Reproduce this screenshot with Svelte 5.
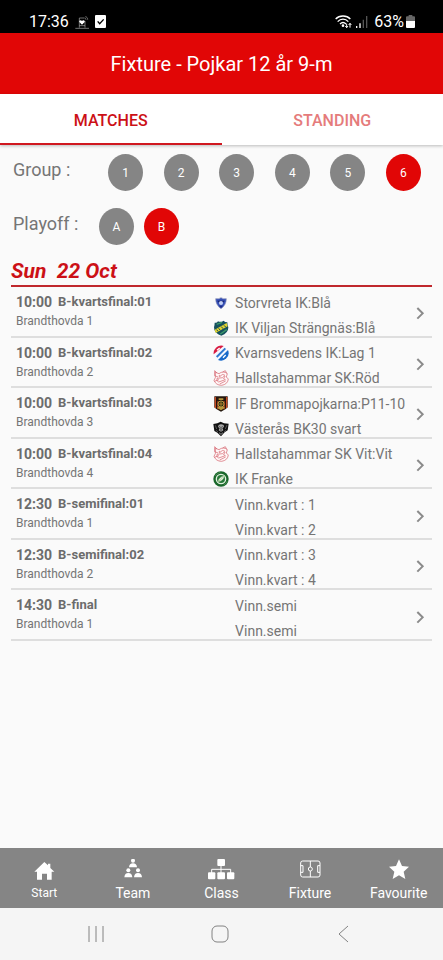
<script lang="ts">
  type Team = { name: string; logo?: string };
  type Match = { time: string; title: string; place: string; teams: Team[] };

  let tab = 'MATCHES';
  let group = '6';
  let playoff = 'B';

  const tabs = ['MATCHES', 'STANDING'];
  const groups = ['1', '2', '3', '4', '5', '6'];
  const playoffs = ['A', 'B'];
  const menu = ['Start', 'Team', 'Class', 'Fixture', 'Favourite'];

  const matches: Match[] = [
    {
      time: '10:00',
      title: 'B-kvartsfinal:01',
      place: 'Brandthovda 1',
      teams: [
        { name: 'Storvreta IK:Blå', logo: 'storvreta' },
        { name: 'IK Viljan Strängnäs:Blå', logo: 'viljan' }
      ]
    },
    {
      time: '10:00',
      title: 'B-kvartsfinal:02',
      place: 'Brandthovda 2',
      teams: [
        { name: 'Kvarnsvedens IK:Lag 1', logo: 'kvarnsveden' },
        { name: 'Hallstahammar SK:Röd', logo: 'hallstahammar' }
      ]
    },
    {
      time: '10:00',
      title: 'B-kvartsfinal:03',
      place: 'Brandthovda 3',
      teams: [
        { name: 'IF Brommapojkarna:P11-10', logo: 'bromma' },
        { name: 'Västerås BK30 svart', logo: 'bk30' }
      ]
    },
    {
      time: '10:00',
      title: 'B-kvartsfinal:04',
      place: 'Brandthovda 4',
      teams: [
        { name: 'Hallstahammar SK Vit:Vit', logo: 'hallstahammar' },
        { name: 'IK Franke', logo: 'franke' }
      ]
    },
    {
      time: '12:30',
      title: 'B-semifinal:01',
      place: 'Brandthovda 1',
      teams: [{ name: 'Vinn.kvart : 1' }, { name: 'Vinn.kvart : 2' }]
    },
    {
      time: '12:30',
      title: 'B-semifinal:02',
      place: 'Brandthovda 2',
      teams: [{ name: 'Vinn.kvart : 3' }, { name: 'Vinn.kvart : 4' }]
    },
    {
      time: '14:30',
      title: 'B-final',
      place: 'Brandthovda 1',
      teams: [{ name: 'Vinn.semi' }, { name: 'Vinn.semi' }]
    }
  ];
</script>

<div class="app">
  <div class="status">
    <span>17:36</span>
    <svg class="status-icon" width="14" height="14" viewBox="0 0 42 42" fill="none" stroke="#aaa" stroke-width="2">
      <path d="M1 40h41M13 38V9h16M30 18v20M13 32h17M31 5c5 1 7 4 7 9M30 10c2 0 3 2 3 4" />
      <path d="M21 29l-8-8c-2-5 5-8 8-3 3-5 10-2 8 3z" fill="#fff" stroke="none" />
    </svg>
    <svg class="status-icon" width="11" height="13" viewBox="0 0 33 39">
      <rect width="33" height="39" rx="3" fill="#fff" />
      <path d="M8 19l6 7 12-13" fill="none" stroke="#000" stroke-width="4" />
    </svg>
    <svg class="status-icon right" width="17" height="14" viewBox="0 0 51 42" fill="none" stroke="#fff" stroke-width="4">
      <path d="M2 12c11-12 33-12 44 0M8 20c9-10 23-10 32 0M15 27c6-6 12-6 18 0" />
      <circle cx="24" cy="32" r="4" fill="#fff" stroke="none" />
      <path d="M35 26v12M31 33l4 5 4-5M45 38V25M41 30l4-5 4 5" stroke-width="3" />
    </svg>
    <svg class="status-icon signal" width="12" height="13" viewBox="0 0 36 39">
      <path d="M0 33h4v6H0zM10 25h4v14h-4z" fill="#fff" />
      <path d="M20 14h4v25h-4zM30 3h4v36h-4z" fill="#555" />
    </svg>
    <span class="percent">63%</span>
    <svg width="9" height="13" viewBox="0 0 27 39">
      <path d="M8 0h11v4h5q3 0 3 3v11H0V7q0-3 3-3h5z" fill="#666" />
      <path d="M0 18h27v18q0 3-3 3H3q-3 0-3-3z" fill="#fff" />
    </svg>
  </div>

  <header><h1>Fixture - Pojkar 12 år 9-m</h1></header>

  <div class="tabs">
    {#each tabs as t}
      <button class:active={tab === t} on:click={() => (tab = t)}>{t}</button>
    {/each}
  </div>

  <main>
    <div class="filters">
      <div class="filter">
        <span class="label">Group :</span>
        <div class="circles spread">
          {#each groups as g}
            <button class:active={group === g} on:click={() => (group = g)}>{g}</button>
          {/each}
        </div>
      </div>
      <div class="filter">
        <span class="label">Playoff :</span>
        <div class="circles">
          {#each playoffs as p}
            <button class:active={playoff === p} on:click={() => (playoff = p)}>{p}</button>
          {/each}
        </div>
      </div>
    </div>

    <h2>{'Sun  22 Oct'}</h2>

    <div class="matches">
      {#each matches as match}
        <a class="match" href="#match">
          <div class="info">
            <div class="title">
              <span class="time">{match.time}</span>
              <span>{match.title}</span>
            </div>
            <div class="place">{match.place}</div>
          </div>
          <div class="teams">
            {#each match.teams as team}
              <div class="team">
                <svg class="logo" width="16" height="16" viewBox="0 0 48 48">
                  {#if team.logo === 'storvreta'}
                    <path d="M8 11q8 2 16-3 8 5 16 3 0 19-16 30Q8 30 8 11z" fill="#354fb5" stroke="#8c93b8" stroke-width="2" />
                    <path d="M13 17h22l-3 5H16z" fill="#18236e" />
                    <circle cx="24" cy="24" r="6" fill="#c4d1f5" />
                    <path d="M18 32h12l-6 7z" fill="#1e2c86" />
                  {:else if team.logo === 'viljan'}
                    <path d="M5 8q6 2 10-4 8 4 17-2 3 5 11 5 0 9 3 15 0 18-21 25Q3 41 3 22q2-7 2-14z" fill="#15505e" />
                    <path d="M5 29L41 9l3 10L8 39z" fill="#e0d331" />
                    <path d="M11 29l4 5M17 25l5 6M25 20l5 6M33 16l5 5" stroke="#174f55" stroke-width="3" />
                    <path d="M11 13l16-6M22 42l19-13" stroke="#3c9a68" stroke-width="4" />
                  {:else if team.logo === 'kvarnsveden'}
                    <circle cx="24" cy="24" r="23" fill="#f5f8ff" />
                    <path d="M2 28A23 23 0 0 1 32 3z" fill="#d9193f" />
                    <path d="M15 45L45 15A23 23 0 0 1 15 45z" fill="#1769c9" />
                    <path d="M11 36L37 10" stroke="#2e78cf" stroke-width="6" />
                    <path d="M12 16l8-7M30 38l8-8" stroke="#fff" stroke-width="4" />
                  {:else if team.logo === 'hallstahammar'}
                    <g fill="#fff7f7" stroke="#d35e68" stroke-width="2">
                      <path d="M7 7l11 4q13-10 25 0l-3 10 6 6q-2 16-20 19Q9 46 3 31l4-8z" />
                      <path d="M12 9L5 2v15l10 4M23 17q6-7 13-1M12 25l17-2 8 6-20 7q-8-3-5-11zM4 34l14-5M20 42l18-9M29 6l8-4 4 8" fill="none" />
                      <circle cx="20" cy="18" r="2" />
                      <circle cx="34" cy="20" r="2" />
                    </g>
                  {:else if team.logo === 'bromma'}
                    <path d="M4 1h40v33q-5 7-20 13Q9 41 4 34z" fill="#21160e" />
                    <path d="M7 3v33M15 16v24M33 16v24M41 3v33" stroke="#c84a22" stroke-width="4" />
                    <path d="M11 4h26v10H11z" fill="#27150c" />
                    <path d="M17 7h14v5H17zM12 35q12-7 24 0l-12 8z" fill="#b7983b" />
                    <circle cx="24" cy="24" r="9" fill="#1f2711" stroke="#b89b43" stroke-width="3" />
                    <path d="M18 24h12M24 18v12" stroke="#ad7f2d" stroke-width="3" />
                  {:else if team.logo === 'bk30'}
                    <path d="M1 9l12-2 10-5 10 5 14 1-3 20-9 6-11 12-11-11-9-5z" fill="#111" />
                    <path d="M17 12q7-5 15 0l1 6-5 3 3 7-7 4-7-4 3-7-5-3z" fill="#aaa" />
                    <path d="M19 16l4 3M29 16l-4 3M21 27h6M24 20v5" stroke="#111" stroke-width="2" />
                    <path d="M18 35l6 5 6-5" fill="none" stroke="#ccc" stroke-width="2" />
                    <path d="M7 13l4 11M42 12l-5 12M9 28l6 5M39 28l-6 5" stroke="#777" stroke-width="2" />
                  {:else if team.logo === 'franke'}
                    <circle cx="24" cy="24" r="23" fill="#19672a" />
                    <circle cx="24" cy="24" r="14" fill="#26783a" stroke="#e2f1df" stroke-width="4" />
                    <path d="M15 32q2-14 19-18-2 15-19 18zM17 31l13-14" fill="#f0faec" stroke="#95bd86" stroke-width="2" />
                    <path d="M7 15q5-9 15-11M32 43q8-5 11-13" fill="none" stroke="#5a9761" stroke-width="2" />
                  {/if}
                </svg>
                <span>{team.name}</span>
              </div>
            {/each}
          </div>
          <svg class="arrow" width="9" height="13" viewBox="0 0 27 39" fill="none" stroke="#8b8b8b" stroke-width="6">
            <path d="M4 3l16 16L4 35" />
          </svg>
        </a>
      {/each}
    </div>
  </main>

  <nav class="menu">
    {#each menu as item}
      <a href="#{item}" class:small={item === 'Start'}>
        <svg width="28" height="22" viewBox="0 0 84 66" fill="#fff">
          {#if item === 'Start'}
            <path d="M43 9l11 10v-5h7v13l12 11h-8v24H51V44H36v18H21V38h-8z" />
          {:else if item === 'Team'}
            <circle cx="42" cy="5" r="6" />
            <path d="M30 25q1-12 12-12t12 12z" />
            <circle cx="28" cy="34" r="6" />
            <path d="M16 55q1-13 12-13t12 13z" />
            <circle cx="57" cy="34" r="6" />
            <path d="M45 55q1-13 12-13t12 13z" />
          {:else if item === 'Class'}
            <rect x="31" y="0" width="23" height="21" rx="3" />
            <rect x="3" y="40" width="22" height="21" rx="3" />
            <rect x="31" y="40" width="23" height="21" rx="3" />
            <rect x="60" y="40" width="22" height="21" rx="3" />
            <path d="M14 42V31h57v11M42 20v22" fill="none" stroke="#fff" stroke-width="3" />
          {:else if item === 'Fixture'}
            <g fill="none" stroke="#fff" stroke-width="3">
              <rect x="14" y="6" width="58" height="48" rx="6" />
              <path d="M43 6v18M43 36v18M14 20h7v20h-7M72 20h-7v20h7" />
              <circle cx="43" cy="30" r="6" />
            </g>
          {:else}
            <path d="M42 1l9 20 21 2-16 15 5 22-19-11-19 11 5-22-16-15 21-2z" />
          {/if}
        </svg>
        <span>{item}</span>
      </a>
    {/each}
  </nav>

  <div class="system">
    <button aria-label="Recent apps">
      <svg width="18" height="18" viewBox="0 0 18 18"><path d="M2 1v16M9 1v16M16 1v16" /></svg>
    </button>
    <button aria-label="Home">
      <svg width="18" height="18" viewBox="0 0 18 18"><rect x="1" y="1" width="16" height="16" rx="5" /></svg>
    </button>
    <button aria-label="Back">
      <svg width="18" height="18" viewBox="0 0 18 18"><path d="M13 1L4 9l9 8" /></svg>
    </button>
  </div>
</div>

<style>
  :global(body) {
    margin: 0;
    font-family: Roboto, 'Liberation Sans', sans-serif;
  }

  .app {
    display: flex;
    flex-direction: column;
    min-height: 100vh;
    background: #fafafa;
    color: #757575;
  }

  button {
    margin: 0;
    padding: 0;
    border: 0;
    background: none;
    font-family: inherit;
  }

  a {
    color: inherit;
    text-decoration: none;
  }

  .status {
    display: flex;
    align-items: center;
    height: 33px;
    padding: 10px 28px 0 29px;
    box-sizing: border-box;
    background: #000;
    color: #fff;
    font-size: 16px;
  }

  .status-icon {
    margin-left: 6px;
  }

  .right {
    margin-left: auto;
  }

  .signal {
    margin-left: 4px;
  }

  .percent {
    margin: 0 2px 0 6px;
  }

  header {
    display: flex;
    align-items: center;
    justify-content: center;
    height: 61px;
    background: #e10606;
    color: #fff;
  }

  h1 {
    margin: 0;
    font-size: 20px;
    font-weight: 400;
  }

  .tabs {
    display: flex;
    height: 51px;
    background: #fff;
    box-shadow: 0 1px 3px rgba(0, 0, 0, 0.25);
  }

  .tabs button {
    flex: 1;
    padding-top: 3px;
    border-bottom: 2px solid transparent;
    color: #e57b7b;
    font-size: 16px;
    font-weight: 500;
  }

  .tabs button.active {
    border-color: #d01820;
    color: #cc1016;
  }

  main {
    flex: 1;
    padding: 9px 11px;
  }

  .filters {
    display: grid;
    gap: 17px;
    padding: 0 11px 14px 2px;
  }

  .filter {
    display: flex;
  }

  .label {
    min-width: 86px;
    font-size: 18px;
    line-height: 32px;
  }

  .circles {
    display: flex;
    gap: 10px;
  }

  .spread {
    flex: 1;
    justify-content: space-between;
    margin-left: 9px;
  }

  .circles button {
    width: 35px;
    height: 37px;
    border-radius: 50%;
    background: #858585;
    color: #fff;
    font-size: 12px;
  }

  .circles button.active {
    background: #e10606;
  }

  h2 {
    margin: 0;
    padding-bottom: 2px;
    border-bottom: 2px solid #c0282d;
    color: #cc1016;
    font-size: 21px;
    font-style: italic;
    line-height: 24px;
    white-space: pre;
  }

  .matches {
    display: grid;
    grid-auto-rows: 1fr;
    min-height: 354px;
  }

  .match {
    display: grid;
    grid-template-columns: 48% 1fr 24px;
    border-bottom: 2px solid #dedede;
  }

  .info {
    padding: 6px 0 0 5px;
  }

  .title {
    display: flex;
    gap: 6px;
    font-size: 13px;
    font-weight: 700;
    line-height: 18px;
    color: #6c6c6c;
  }

  .time {
    font-size: 14px;
  }

  .place {
    font-size: 12px;
    line-height: 20px;
  }

  .teams {
    height: 45px;
    padding-top: 3px;
    white-space: nowrap;
  }

  .team {
    display: flex;
    align-items: center;
    gap: 6px;
    height: 25px;
    font-size: 14px;
  }

  .arrow {
    align-self: center;
    justify-self: center;
    margin-top: 5px;
  }

  .menu {
    display: flex;
    height: 60px;
    background: #858585;
    color: #fff;
  }

  .menu a {
    display: flex;
    flex: 1 0 0;
    flex-direction: column;
    align-items: center;
    gap: 2px;
    padding-top: 11px;
    font-size: 14px;
    line-height: 20px;
  }

  .menu .small {
    font-size: 12px;
  }

  .system {
    display: flex;
    align-items: center;
    justify-content: space-between;
    height: 52px;
    padding: 0 90px 0 87px;
    background: #f5f5f5;
  }

  .system svg {
    display: block;
    fill: none;
    stroke: #828282;
    stroke-width: 1;
  }
</style>
